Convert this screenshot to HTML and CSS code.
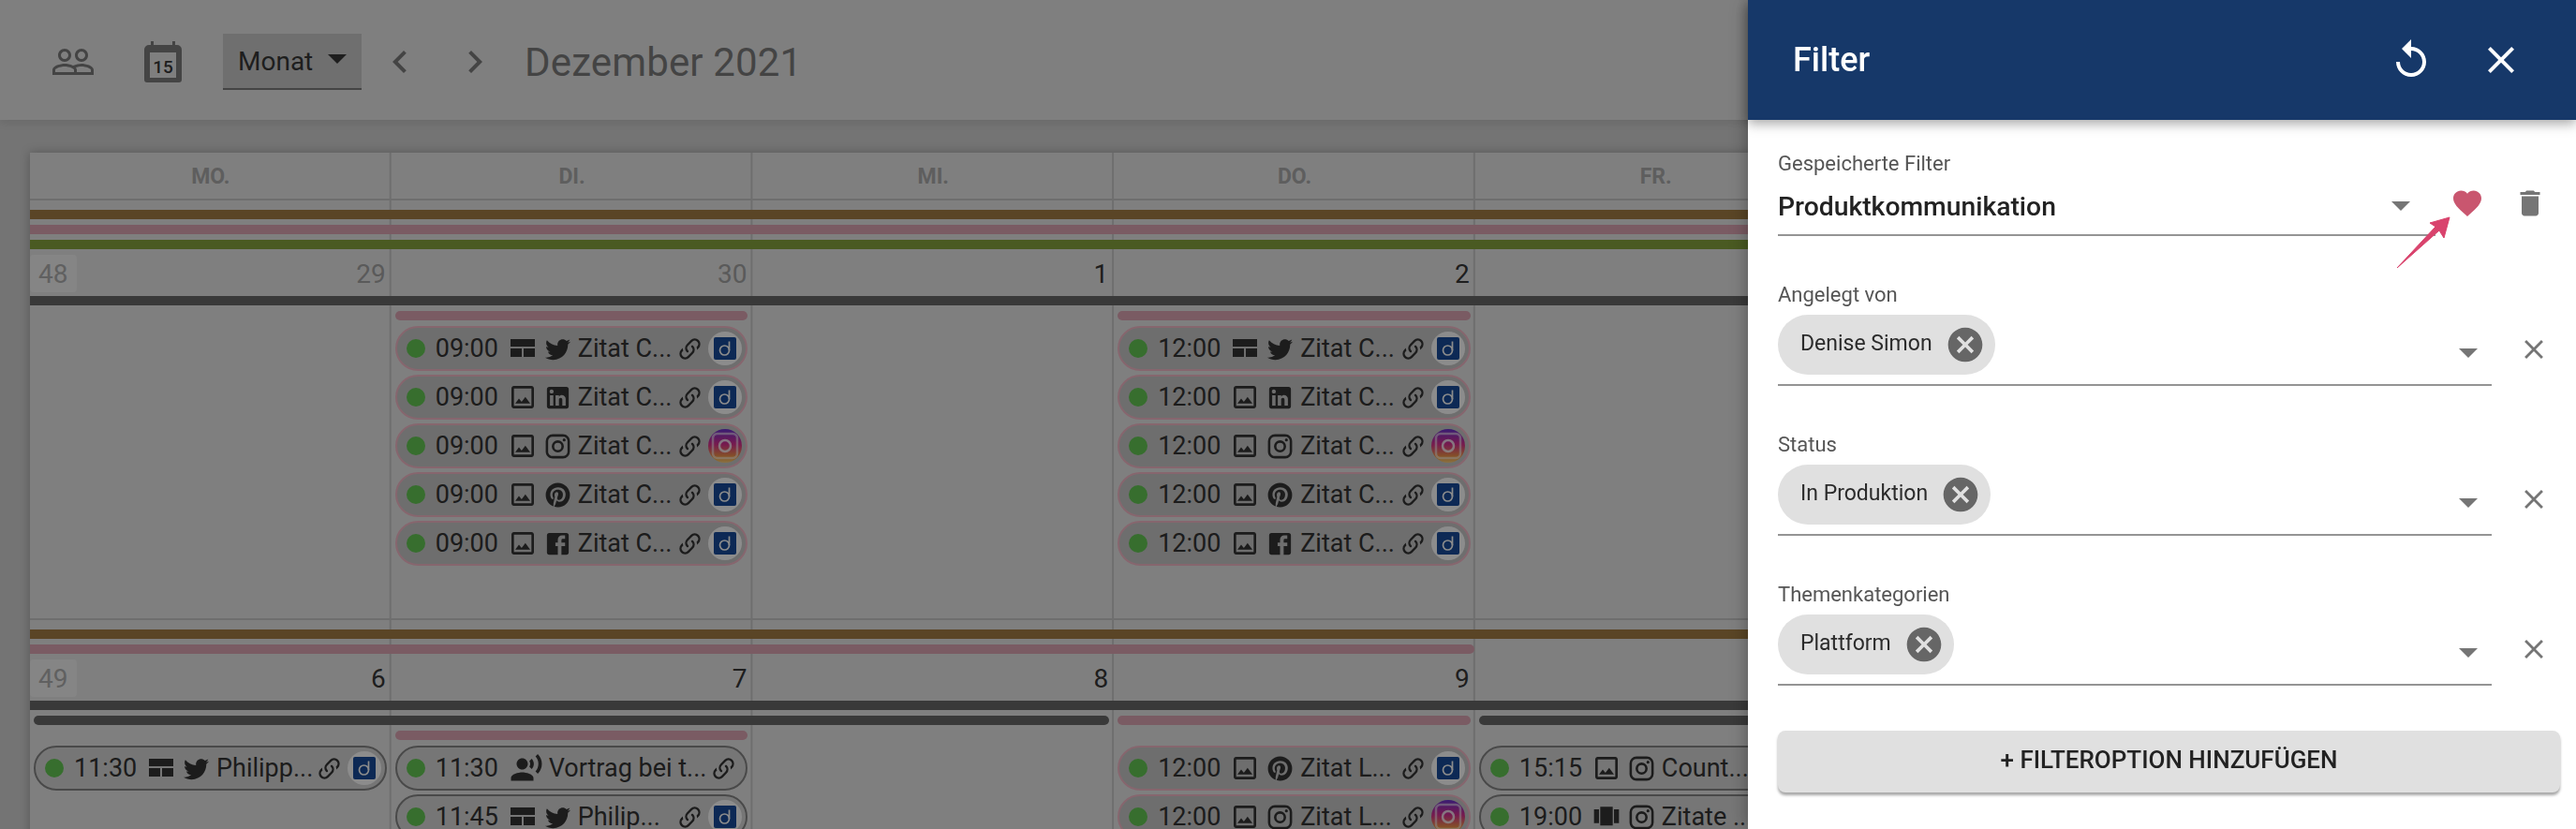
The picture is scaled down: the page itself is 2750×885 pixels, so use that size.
FILE: index.html
```html
<!DOCTYPE html>
<html lang="de">
<head>
    <meta charset="UTF-8">
    <title>Kalender</title>
    <link rel="stylesheet" href="styles.css">
</head>
<body>
    <!-- icon sprite -->
    <svg class="sprite" xmlns="http://www.w3.org/2000/svg">
        <symbol id="i-people" viewBox="0 0 24 24"><path d="M16.5 13c-1.2 0-3.07.34-4.5 1-1.43-.67-3.3-1-4.5-1C5.33 13 1 14.08 1 16.25V19h22v-2.75c0-2.17-4.33-3.25-6.5-3.25zm-4 4.5h-10v-1.25c0-.54 2.56-1.75 5-1.75s5 1.21 5 1.75v1.25zm9 0H14v-1.25c0-.46-.2-.86-.52-1.22.88-.3 1.96-.53 3.02-.53 2.44 0 5 1.21 5 1.75v1.25zM7.5 12c1.93 0 3.5-1.57 3.5-3.5S9.43 5 7.5 5 4 6.57 4 8.5 5.57 12 7.5 12zm0-5.5c1.1 0 2 .9 2 2s-.9 2-2 2-2-.9-2-2 .9-2 2-2zm9 5.5c1.93 0 3.5-1.57 3.5-3.5S18.43 5 16.5 5 13 6.57 13 8.5s1.57 3.5 3.5 3.5zm0-5.5c1.1 0 2 .9 2 2s-.9 2-2 2-2-.9-2-2 .9-2 2-2z"/></symbol>
        <symbol id="i-left" viewBox="0 0 24 24"><path d="M15.41 7.41L14 6l-6 6 6 6 1.41-1.41L10.83 12z"/></symbol>
        <symbol id="i-right" viewBox="0 0 24 24"><path d="M8.59 16.59L10 18l6-6-6-6-1.41 1.41L13.17 12z"/></symbol>
        <symbol id="i-layout" viewBox="-3 -6 32 32"><path d="M0 0h26v8H0zM0 10h12v9H0zM14 10h12v9H14z"/></symbol>
        <symbol id="i-image" viewBox="0 0 24 24"><path d="M19 5v14H5V5h14m0-2H5c-1.1 0-2 .9-2 2v14c0 1.1.9 2 2 2h14c1.1 0 2-.9 2-2V5c0-1.1-.9-2-2-2zm-4.86 8.86l-3 3.87L9 13.14 6 17h12l-3.86-5.14z"/></symbol>
        <symbol id="i-voice" viewBox="0 0 24 24"><path d="M9 13c2.21 0 4-1.79 4-4s-1.79-4-4-4-4 1.79-4 4 1.79 4 4 4zm0 2c-2.67 0-8 1.34-8 4v2h16v-2c0-2.66-5.33-4-8-4zm6.76-9.64l-1.68 1.69c.84 1.18.84 2.71 0 3.89l1.68 1.69c2.02-2.02 2.02-5.07 0-7.27zM20.07 2l-1.63 1.63c2.77 3.02 2.77 7.56 0 10.74L20.07 16c3.9-3.89 3.91-9.95 0-14z"/></symbol>
        <symbol id="i-carousel" viewBox="0 0 24 24"><path d="M7 19h10V4H7v15zm-5-2h4V6H2v11zm16-11v11h4V6h-4z"/></symbol>
        <symbol id="i-twitter" viewBox="0 0 24 24"><path d="M22.46 6c-.77.35-1.6.58-2.46.69.88-.53 1.56-1.37 1.88-2.38-.83.5-1.75.85-2.72 1.05C18.37 4.5 17.26 4 16 4c-2.35 0-4.27 1.92-4.27 4.29 0 .34.04.67.11.98C8.28 9.09 5.11 7.38 3 4.79c-.37.63-.58 1.37-.58 2.15 0 1.49.75 2.81 1.91 3.56-.71 0-1.37-.2-1.95-.5v.03c0 2.08 1.48 3.82 3.44 4.21a4.22 4.22 0 0 1-1.93.07 4.28 4.28 0 0 0 4 2.98 8.521 8.521 0 0 1-5.33 1.84c-.34 0-.68-.02-1.02-.06C3.44 20.29 5.7 21 8.12 21 16 21 20.33 14.46 20.33 8.79c0-.19 0-.37-.01-.56.84-.6 1.56-1.36 2.14-2.23z"/></symbol>
        <symbol id="i-linkedin" viewBox="0 0 24 24"><path d="M19 3a2 2 0 0 1 2 2v14a2 2 0 0 1-2 2H5a2 2 0 0 1-2-2V5a2 2 0 0 1 2-2h14m-.5 15.5v-5.3a3.26 3.26 0 0 0-3.26-3.26c-.85 0-1.84.52-2.32 1.3v-1.11h-2.79v8.37h2.79v-4.93c0-.77.62-1.4 1.39-1.4a1.4 1.4 0 0 1 1.4 1.4v4.93h2.79M6.88 8.56a1.68 1.68 0 0 0 1.68-1.68c0-.93-.75-1.69-1.68-1.69a1.69 1.69 0 0 0-1.69 1.69c0 .93.76 1.68 1.69 1.68m1.39 9.94v-8.37H5.5v8.37h2.77z"/></symbol>
        <symbol id="i-instagram" viewBox="0 0 24 24"><path d="M7.8 2h8.4C19.4 2 22 4.6 22 7.8v8.4a5.8 5.8 0 0 1-5.8 5.8H7.8C4.6 22 2 19.4 2 16.2V7.8A5.8 5.8 0 0 1 7.8 2m-.2 2A3.6 3.6 0 0 0 4 7.6v8.8C4 18.39 5.61 20 7.6 20h8.8a3.6 3.6 0 0 0 3.6-3.6V7.6C20 5.61 18.39 4 16.4 4H7.6m9.65 1.5a1.25 1.25 0 0 1 1.25 1.25A1.25 1.25 0 0 1 17.25 8 1.25 1.25 0 0 1 16 6.75a1.25 1.25 0 0 1 1.25-1.25M12 7a5 5 0 0 1 5 5 5 5 0 0 1-5 5 5 5 0 0 1-5-5 5 5 0 0 1 5-5m0 2a3 3 0 0 0-3 3 3 3 0 0 0 3 3 3 3 0 0 0 3-3 3 3 0 0 0-3-3z"/></symbol>
        <symbol id="i-pinterest" viewBox="0 0 24 24"><path d="M9.04 21.54c.96.29 1.93.46 2.96.46a10 10 0 0 0 10-10A10 10 0 0 0 12 2 10 10 0 0 0 2 12c0 4.25 2.67 7.9 6.44 9.34-.09-.78-.18-2.07 0-2.96l1.15-4.94s-.29-.58-.29-1.5c0-1.38.86-2.41 1.84-2.41.86 0 1.26.63 1.26 1.44 0 .86-.57 2.09-.86 3.27-.17.98.52 1.84 1.52 1.84 1.78 0 3.16-1.9 3.16-4.58 0-2.4-1.72-4.04-4.19-4.04-2.82 0-4.48 2.1-4.48 4.31 0 .86.28 1.73.74 2.3.09.06.09.14.06.29l-.29 1.09c0 .17-.11.23-.28.11-1.28-.56-2.02-2.38-2.02-3.85 0-3.16 2.24-6.03 6.56-6.03 3.44 0 6.12 2.47 6.12 5.75 0 3.44-2.13 6.2-5.18 6.2-.97 0-1.92-.52-2.26-1.13l-.67 2.37c-.23.86-.86 2.01-1.29 2.7v-.03z"/></symbol>
        <symbol id="i-facebook" viewBox="0 0 24 24"><path d="M5 3h14a2 2 0 0 1 2 2v14a2 2 0 0 1-2 2H5a2 2 0 0 1-2-2V5a2 2 0 0 1 2-2m13 2h-2.5A3.5 3.5 0 0 0 12 8.5V11h-2v3h2v7h3v-7h3v-3h-3V9a1 1 0 0 1 1-1h2V5z"/></symbol>
        <symbol id="i-link" viewBox="0 0 24 24"><path d="M10.59 13.41c.41.39.41 1.03 0 1.42-.39.39-1.03.39-1.42 0a5.003 5.003 0 0 1 0-7.07l3.54-3.54a5.003 5.003 0 0 1 7.07 0 5.003 5.003 0 0 1 0 7.07l-1.49 1.49c.01-.82-.12-1.64-.4-2.42l.47-.48a2.982 2.982 0 0 0 0-4.24 2.982 2.982 0 0 0-4.24 0l-3.53 3.53a2.982 2.982 0 0 0 0 4.24m2.82-4.24c.39-.39 1.03-.39 1.42 0a5.003 5.003 0 0 1 0 7.07l-3.54 3.54a5.003 5.003 0 0 1-7.07 0 5.003 5.003 0 0 1 0-7.07l1.49-1.49c-.01.82.12 1.64.4 2.43l-.47.47a2.982 2.982 0 0 0 0 4.24 2.982 2.982 0 0 0 4.24 0l3.53-3.53a2.982 2.982 0 0 0 0-4.24.973.973 0 0 1 0-1.42z"/></symbol>
        <symbol id="i-cancel" viewBox="0 0 24 24"><path d="M12 2C6.47 2 2 6.47 2 12s4.47 10 10 10 10-4.47 10-10S17.53 2 12 2zm5 13.59L15.59 17 12 13.41 8.41 17 7 15.59 10.59 12 7 8.41 8.41 7 12 10.59 15.59 7 17 8.41 13.41 12 17 15.59z"/></symbol>
        <symbol id="i-close" viewBox="0 0 24 24"><path d="M19 6.41L17.59 5 12 10.59 6.41 5 5 6.41 10.59 12 5 17.59 6.41 19 12 13.41 17.59 19 19 17.59 13.41 12z"/></symbol>
        <symbol id="i-reset" viewBox="0 0 24 24"><path d="M12 5V1L7 6l5 5V7c3.31 0 6 2.69 6 6s-2.69 6-6 6-6-2.69-6-6H4c0 4.42 3.58 8 8 8s8-3.58 8-8-3.58-8-8-8z"/></symbol>
        <symbol id="i-heart" viewBox="0 0 24 24"><path d="M12 21.35l-1.45-1.32C5.4 15.36 2 12.28 2 8.5 2 5.42 4.42 3 7.5 3c1.74 0 3.41.81 4.5 2.09C13.09 3.81 14.76 3 16.5 3 19.58 3 22 5.42 22 8.5c0 3.78-3.4 6.86-8.55 11.54L12 21.35z"/></symbol>
        <symbol id="i-trash" viewBox="0 0 24 24"><path d="M6 19c0 1.1.9 2 2 2h8c1.1 0 2-.9 2-2V7H6v12zM19 4h-3.5l-1-1h-5l-1 1H5v2h14V4z"/></symbol>
        <symbol id="p-d" viewBox="0 0 24 24">
            <rect width="24" height="24" rx="2" fill="#184c9b"/>
            <circle cx="11.5" cy="14" r="5" fill="none" stroke="#fff" stroke-width="1.7"/>
            <path d="M16.5 14V4.500" fill="none" stroke="#fff" stroke-width="1.700"/>
        </symbol>
        <symbol id="p-insta" viewBox="0 0 36 36">
            <path d="M10 5h16a5 5 0 0 1 5 5v16a5 5 0 0 1-5 5H10a5 5 0 0 1-5-5V10a5 5 0 0 1 5-5z" fill="none" stroke="#fff" stroke-opacity=".55" stroke-width="2.500"/>
            <circle cx="18" cy="18" r="6" fill="none" stroke="#fff" stroke-opacity=".8" stroke-width="2.500"/>
        </symbol>
    </svg>

    <div class="toolbar">
        <svg class="tool-icon"><use href="#i-people"/></svg>
        <svg class="cal-icon" viewBox="0 0 48 48">
            <path d="M11 2h3v4h20V2h3v4h2a5 5 0 0 1 5 5v32a3 3 0 0 1-3 3H7a3 3 0 0 1-3-3V11a5 5 0 0 1 5-5h2z"/>
            <rect x="10" y="14" width="28" height="27" fill="#e8e8e8"/>
            <text x="24" y="36" text-anchor="middle">15</text>
        </svg>
        <div class="view-select">
            <span>Monat</span>
            <i class="caret caret-dark"></i>
        </div>
        <svg class="tool-icon chevron"><use href="#i-left"/></svg>
        <svg class="tool-icon chevron"><use href="#i-right"/></svg>
        <div class="month-title">Dezember 2021</div>
    </div>

    <div class="calendar">
        <div class="weekdays">
            <div>MO.</div>
            <div>DI.</div>
            <div>MI.</div>
            <div>DO.</div>
            <div>FR.</div>
        </div>

        <div class="week week-first">
            <div class="bar full brown"></div>
            <div class="bar full pink"></div>
            <div class="bar full green"></div>

            <div class="day-head col-1"><span class="week-no">48</span><span class="date muted">29</span></div>
            <div class="day-head"><span class="date muted">30</span></div>
            <div class="day-head"><span class="date">1</span></div>
            <div class="day-head"><span class="date">2</span></div>

            <div class="bar full dark"></div>

            <div class="bar round pink col-2"></div>
            <div class="bar round pink col-4"></div>

            <div class="events col-2">
                <div class="event"><i class="dot"></i><span class="time">09:00</span><svg class="ic-type"><use href="#i-layout"/></svg><svg class="ic-net"><use href="#i-twitter"/></svg><span class="title">Zitat C...</span><svg class="ic-link"><use href="#i-link"/></svg><span class="platform"><svg><use href="#p-d"/></svg></span></div>
                <div class="event"><i class="dot"></i><span class="time">09:00</span><svg class="ic-type"><use href="#i-image"/></svg><svg class="ic-net"><use href="#i-linkedin"/></svg><span class="title">Zitat C...</span><svg class="ic-link"><use href="#i-link"/></svg><span class="platform"><svg><use href="#p-d"/></svg></span></div>
                <div class="event"><i class="dot"></i><span class="time">09:00</span><svg class="ic-type"><use href="#i-image"/></svg><svg class="ic-net"><use href="#i-instagram"/></svg><span class="title">Zitat C...</span><svg class="ic-link"><use href="#i-link"/></svg><span class="platform insta"><svg><use href="#p-insta"/></svg></span></div>
                <div class="event"><i class="dot"></i><span class="time">09:00</span><svg class="ic-type"><use href="#i-image"/></svg><svg class="ic-net"><use href="#i-pinterest"/></svg><span class="title">Zitat C...</span><svg class="ic-link"><use href="#i-link"/></svg><span class="platform"><svg><use href="#p-d"/></svg></span></div>
                <div class="event"><i class="dot"></i><span class="time">09:00</span><svg class="ic-type"><use href="#i-image"/></svg><svg class="ic-net"><use href="#i-facebook"/></svg><span class="title">Zitat C...</span><svg class="ic-link"><use href="#i-link"/></svg><span class="platform"><svg><use href="#p-d"/></svg></span></div>
            </div>
            <div class="events col-4">
                <div class="event"><i class="dot"></i><span class="time">12:00</span><svg class="ic-type"><use href="#i-layout"/></svg><svg class="ic-net"><use href="#i-twitter"/></svg><span class="title">Zitat C...</span><svg class="ic-link"><use href="#i-link"/></svg><span class="platform"><svg><use href="#p-d"/></svg></span></div>
                <div class="event"><i class="dot"></i><span class="time">12:00</span><svg class="ic-type"><use href="#i-image"/></svg><svg class="ic-net"><use href="#i-linkedin"/></svg><span class="title">Zitat C...</span><svg class="ic-link"><use href="#i-link"/></svg><span class="platform"><svg><use href="#p-d"/></svg></span></div>
                <div class="event"><i class="dot"></i><span class="time">12:00</span><svg class="ic-type"><use href="#i-image"/></svg><svg class="ic-net"><use href="#i-instagram"/></svg><span class="title">Zitat C...</span><svg class="ic-link"><use href="#i-link"/></svg><span class="platform insta"><svg><use href="#p-insta"/></svg></span></div>
                <div class="event"><i class="dot"></i><span class="time">12:00</span><svg class="ic-type"><use href="#i-image"/></svg><svg class="ic-net"><use href="#i-pinterest"/></svg><span class="title">Zitat C...</span><svg class="ic-link"><use href="#i-link"/></svg><span class="platform"><svg><use href="#p-d"/></svg></span></div>
                <div class="event"><i class="dot"></i><span class="time">12:00</span><svg class="ic-type"><use href="#i-image"/></svg><svg class="ic-net"><use href="#i-facebook"/></svg><span class="title">Zitat C...</span><svg class="ic-link"><use href="#i-link"/></svg><span class="platform"><svg><use href="#p-d"/></svg></span></div>
            </div>
        </div>

        <div class="week">
            <div class="bar full brown"></div>
            <div class="bar pink span-4"></div>

            <div class="day-head col-1"><span class="week-no">49</span><span class="date">6</span></div>
            <div class="day-head"><span class="date">7</span></div>
            <div class="day-head"><span class="date">8</span></div>
            <div class="day-head"><span class="date">9</span></div>

            <div class="bar full dark"></div>

            <div class="bar round dark span-3"></div>
            <div class="bar round pink col-4"></div>
            <div class="bar round dark col-5-end"></div>

            <div class="bar round pink col-2"></div>

            <div class="events col-1">
                <div class="event outlined"><i class="dot"></i><span class="time">11:30</span><svg class="ic-type"><use href="#i-layout"/></svg><svg class="ic-net"><use href="#i-twitter"/></svg><span class="title">Philipp...</span><svg class="ic-link"><use href="#i-link"/></svg><span class="platform"><svg><use href="#p-d"/></svg></span></div>
            </div>
            <div class="events col-2">
                <div class="event outlined"><i class="dot"></i><span class="time">11:30</span><svg class="ic-type ic-voice"><use href="#i-voice"/></svg><span class="title">Vortrag bei t...</span><svg class="ic-link"><use href="#i-link"/></svg></div>
                <div class="event outlined"><i class="dot"></i><span class="time">11:45</span><svg class="ic-type"><use href="#i-layout"/></svg><svg class="ic-net"><use href="#i-twitter"/></svg><span class="title">Philip...</span><svg class="ic-link"><use href="#i-link"/></svg><span class="platform"><svg><use href="#p-d"/></svg></span></div>
            </div>
            <div class="events col-4">
                <div class="event"><i class="dot"></i><span class="time">12:00</span><svg class="ic-type"><use href="#i-image"/></svg><svg class="ic-net"><use href="#i-pinterest"/></svg><span class="title">Zitat L...</span><svg class="ic-link"><use href="#i-link"/></svg><span class="platform"><svg><use href="#p-d"/></svg></span></div>
                <div class="event"><i class="dot"></i><span class="time">12:00</span><svg class="ic-type"><use href="#i-image"/></svg><svg class="ic-net"><use href="#i-instagram"/></svg><span class="title">Zitat L...</span><svg class="ic-link"><use href="#i-link"/></svg><span class="platform insta"><svg><use href="#p-insta"/></svg></span></div>
            </div>
            <div class="events col-5">
                <div class="event outlined"><i class="dot"></i><span class="time">15:15</span><svg class="ic-type"><use href="#i-image"/></svg><svg class="ic-net"><use href="#i-instagram"/></svg><span class="title">Count...</span></div>
                <div class="event outlined"><i class="dot"></i><span class="time">19:00</span><svg class="ic-type"><use href="#i-carousel"/></svg><svg class="ic-net"><use href="#i-instagram"/></svg><span class="title">Zitate ...</span></div>
            </div>
        </div>
    </div>

    <!-- backdrop + filter drawer -->
    <div class="backdrop"></div>

    <div class="drawer">
        <div class="drawer-head">
            <div class="drawer-title">Filter</div>
            <svg class="head-icon"><use href="#i-reset"/></svg>
            <svg class="head-icon"><use href="#i-close"/></svg>
        </div>

        <div class="drawer-body">
            <div class="field">
                <label>Gespeicherte Filter</label>
                <div class="field-row">
                    <div class="control control-saved">
                        <span class="saved-value">Produktkommunikation</span>
                        <i class="caret"></i>
                    </div>
                    <svg class="saved-icon heart"><use href="#i-heart"/></svg>
                    <svg class="saved-icon trash"><use href="#i-trash"/></svg>
                </div>
            </div>

            <div class="field">
                <label>Angelegt von</label>
                <div class="field-row">
                    <div class="control">
                        <span class="chip"><span>Denise Simon</span><svg><use href="#i-cancel"/></svg></span>
                        <i class="caret"></i>
                    </div>
                    <svg class="clear"><use href="#i-close"/></svg>
                </div>
            </div>

            <div class="field">
                <label>Status</label>
                <div class="field-row">
                    <div class="control">
                        <span class="chip"><span>In Produktion</span><svg><use href="#i-cancel"/></svg></span>
                        <i class="caret"></i>
                    </div>
                    <svg class="clear"><use href="#i-close"/></svg>
                </div>
            </div>

            <div class="field">
                <label>Themenkategorien</label>
                <div class="field-row">
                    <div class="control">
                        <span class="chip"><span>Plattform</span><svg><use href="#i-cancel"/></svg></span>
                        <i class="caret"></i>
                    </div>
                    <svg class="clear"><use href="#i-close"/></svg>
                </div>
            </div>

            <div class="add-btn">+ FILTEROPTION HINZUFÜGEN</div>
        </div>

        <!-- annotation arrow pointing at the heart -->
        <svg class="callout" viewBox="0 0 60 60">
            <path d="M1 58 L42 14 L36 10 L57 4 L51 26 L46 18 Z" fill="#d9436d" stroke="#d9436d" stroke-linejoin="round"/>
        </svg>
    </div>
</body>
</html>
```

FILE: styles.css
```css
* {
    box-sizing: border-box;
}

html, body {
    height: 100%;
}

body {
    margin: 0;
    background-color: #d3d3d3;
    font-family: Roboto, "Liberation Sans", sans-serif;
    overflow: hidden;
}

.sprite {
    display: none;
}

svg {
    display: block;
    flex: none;
    fill: currentColor;
}

/* toolbar */
.toolbar {
    display: flex;
    align-items: center;
    height: 128px;
    padding: 4px 0 0 54px;
    background-color: #e8e8e8;
    color: #7d7d7d;
    box-shadow: 0 4px 8px rgba(0, 0, 0, 0.08);
}

.tool-icon {
    width: 48px;
    height: 48px;
}

.cal-icon {
    width: 48px;
    height: 48px;
    margin-left: 48px;
}

.cal-icon text {
    font-size: 19px;
    font-weight: 500;
    fill: #383838;
}

.view-select {
    display: flex;
    align-items: center;
    width: 148px;
    height: 60px;
    margin-left: 40px;
    padding-left: 16px;
    background-color: #cbcbcb;
    border-bottom: 2px solid #7d7d7d;
    color: #383838;
    font-size: 28px;
}

.view-select .caret {
    margin: 0 0 4px 16px;
}

.chevron {
    margin-left: 17px;
}

.chevron + .chevron {
    margin-left: 32px;
}

.month-title {
    margin-left: 29px;
    font-size: 42px;
    letter-spacing: 0.15px;
}

.caret {
    display: block;
    flex: none;
    width: 0;
    height: 0;
    border-left: 10px solid transparent;
    border-right: 10px solid transparent;
    border-top: 10px solid #757575;
}

.caret-dark {
    border-top-color: #383838;
}

/* calendar */
.calendar {
    width: 2700px;
    margin: 35px 0 0 32px;
    background-color: #e8e8e8;
    box-shadow: 0 0 10px rgba(0, 0, 0, 0.25);
}

.weekdays {
    display: grid;
    grid-template-columns: repeat(7, 1fr);
    height: 51px;
    border-bottom: 2px solid #c8c8c8;
    background-image: linear-gradient(to right, transparent calc(100% - 2px), #c8c8c8 0);
    background-size: calc(100% / 7) 100%;
}

.weekdays div {
    padding-top: 12px;
    text-align: center;
    font-size: 23px;
    font-weight: 700;
    color: #ababab;
}

.week {
    display: grid;
    grid-template-columns: repeat(7, 1fr);
    align-content: start;
    row-gap: 6px;
    min-height: 448px;
    padding-top: 10px;
    border-bottom: 2px solid #c8c8c8;
    background-image: linear-gradient(to right, transparent calc(100% - 2px), #c8c8c8 0);
    background-size: calc(100% / 7) 100%;
}

.bar {
    height: 10px;
}

.full {
    grid-column: 1 / -1;
}

.round {
    border-radius: 5px;
    margin: 0 5px 0 4px;
}

.brown { background-color: #a47f45; }
.pink { background-color: #dfa6b5; }
.green { background-color: #87a43e; }
.dark { background-color: #696969; }

.col-1 { grid-column: 1; }
.col-2 { grid-column: 2; }
.col-4 { grid-column: 4; }
.col-5 { grid-column: 5; }
.span-3 { grid-column: 1 / 4; }
.span-4 { grid-column: 1 / 5; margin-right: 1px; border-radius: 0 5px 5px 0; }
.col-5-end { grid-column: 5 / -1; }

.day-head {
    display: flex;
    justify-content: space-between;
    height: 38px;
    padding-right: 6px;
    font-size: 28px;
    color: #383838;
}

.date {
    margin-left: auto;
    line-height: 42px;
}

.muted {
    color: #a4a4a4;
}

.week-no {
    width: 50px;
    height: 40px;
    padding-left: 9px;
    border-radius: 4px;
    background-color: #f2f2f2;
    line-height: 42px;
    color: #afafaf;
}

/* events */
.events {
    display: flex;
    flex-direction: column;
    gap: 4px;
    padding: 0 5px 0 4px;
    min-width: 0;
}

.event {
    display: flex;
    align-items: center;
    height: 48px;
    padding: 0 4px 0 10px;
    border: 2px solid #f5bac9;
    border-radius: 24px;
    background-color: #c8c8c8;
    color: #333;
    font-size: 27px;
    white-space: nowrap;
}

.event.outlined {
    border-color: #868686;
    background-color: #d8d8d8;
}

.dot {
    flex: none;
    width: 20px;
    height: 20px;
    margin-right: 11px;
    border-radius: 50%;
    background-color: #64c855;
}

.time {
    flex: none;
    width: 70px;
}

.ic-type {
    width: 32px;
    height: 32px;
    margin-left: 7px;
}

.ic-voice {
    width: 36px;
    height: 36px;
    margin-left: 9px;
}

.ic-net {
    width: 31px;
    height: 31px;
    margin-left: 6px;
}

.title {
    flex: 1;
    min-width: 0;
    margin-left: 6px;
    overflow: hidden;
}

.ic-link {
    width: 29px;
    height: 29px;
    margin-right: 5px;
}

.platform {
    display: flex;
    align-items: center;
    justify-content: center;
    flex: none;
    width: 36px;
    height: 36px;
    border-radius: 50%;
    background-color: #fff;
}

.platform svg {
    width: 24px;
    height: 24px;
}

.platform.insta {
    background: linear-gradient(to bottom, #6a33d0 0%, #d8308f 45%, #f5a040 85%, #f8d080 100%);
}

.platform.insta svg {
    width: 36px;
    height: 36px;
}

/* backdrop + drawer */
.backdrop {
    position: fixed;
    top: 0;
    left: 0;
    width: 100%;
    height: 100%;
    background-color: rgba(0, 0, 0, 0.45);
}

.drawer {
    position: fixed;
    top: 0;
    right: 0;
    bottom: 0;
    width: 884px;
    background-color: #fff;
    box-shadow: 0 0 20px rgba(0, 0, 0, 0.35);
}

.drawer-head {
    display: flex;
    align-items: center;
    gap: 48px;
    height: 128px;
    padding: 0 56px 0 48px;
    background-color: #163869;
    color: #fff;
    box-shadow: 0 4px 12px rgba(0, 0, 0, 0.35);
}

.drawer-title {
    flex: 1;
    font-size: 36px;
    font-weight: 500;
}

.head-icon {
    width: 48px;
    height: 48px;
}

.drawer-body {
    display: flex;
    flex-direction: column;
    gap: 50px;
    padding: 34px 17px 0 32px;
}

.field label {
    display: block;
    height: 24px;
    margin-bottom: 10px;
    font-size: 22px;
    line-height: 26px;
    color: #555;
}

.field-row {
    display: flex;
    align-items: flex-start;
}

.control {
    display: flex;
    align-items: flex-end;
    justify-content: space-between;
    width: 762px;
    height: 76px;
    padding: 0 15px 28px 0;
    border-bottom: 2px solid #949494;
}

.control .chip {
    align-self: flex-start;
}

.control-saved {
    align-items: center;
    width: 702px;
    height: 56px;
    padding: 0 27px 6px 0;
}

.saved-value {
    font-size: 28.300px;
    font-weight: 500;
    color: #222;
}

.saved-icon {
    width: 36px;
    height: 36px;
}

.heart {
    margin: 3px 0 0 16px;
    color: #c9566f;
}

.trash {
    margin: 3px 0 0 31px;
    color: #757575;
}

.chip {
    display: flex;
    align-items: center;
    height: 64px;
    padding: 0 10px 0 24px;
    border-radius: 32px;
    background-color: #e0e0e0;
    font-size: 23px;
    color: #2b2b2b;
}

.chip span {
    padding-bottom: 3px;
}

.chip svg {
    width: 44px;
    height: 44px;
    margin-left: 13px;
    color: #666;
}

.clear {
    width: 34px;
    height: 34px;
    margin: 20px 0 0 28px;
    color: #757575;
}

.add-btn {
    height: 66px;
    margin-top: -2px;
    border-radius: 8px;
    background-color: #e0e0e0;
    box-shadow: 0 3px 3px rgba(0, 0, 0, 0.35);
    text-align: center;
    font-size: 26px;
    font-weight: 500;
    line-height: 62px;
    color: #222;
}

.callout {
    position: absolute;
    left: 692px;
    top: 228px;
    width: 60px;
    height: 60px;
}
```
